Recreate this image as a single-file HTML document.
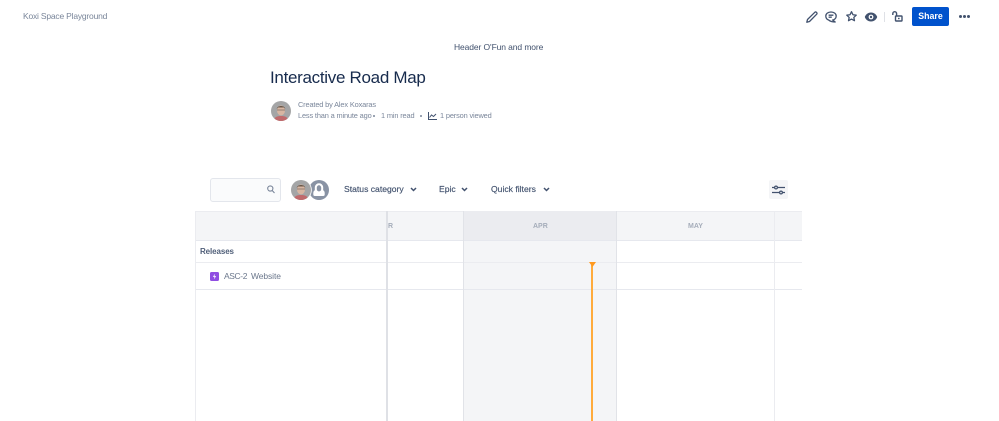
<!DOCTYPE html>
<html><head><meta charset="utf-8">
<style>
html,body{margin:0;padding:0;background:#fff}
body{width:999px;height:421px;overflow:hidden;position:relative;font-family:"Liberation Sans",sans-serif}
.a{position:absolute}
.t{position:absolute;white-space:nowrap;line-height:1;filter:blur(.25px)}
svg{position:absolute;overflow:visible}
.b{font-size:7.4px;letter-spacing:-.15px;color:#7a869a}
.f{font-size:8.6px;color:#42526e;font-weight:400;-webkit-text-stroke:.15px #42526e}
</style></head><body>
<div class="t" style="left:23px;top:12px;font-size:8.5px;letter-spacing:-.2px;color:#7a869a">Koxi Space Playground</div>

<!-- top icons -->
<svg style="left:805px;top:10px" width="14" height="14" viewBox="0 0 14 14" fill="none" stroke="#42526e" stroke-width="1.300" stroke-linejoin="round"><path d="M1.800 12.200l.7-2.700L9.800 2.300a1.100 1.100 0 0 1 1.600 0l.3.300a1.100 1.100 0 0 1 0 1.600L4.500 11.500z"/></svg>
<svg style="left:824px;top:10px" width="14" height="14" viewBox="0 0 14 14" fill="none" stroke="#42526e" stroke-width="1.300" stroke-linejoin="round"><path d="M7 2c3 0 5.200 1.700 5.200 4S10.400 9.800 8.600 10L11.200 12C8.600 12 6 11.200 4.600 10C2.800 9.400 1.800 7.800 1.800 6C1.800 3.700 4 2 7 2z"/><path d="M4.600 5.200h4.800M4.600 7.200h3.200"/></svg>
<svg style="left:845px;top:10px" width="13" height="13" viewBox="0 0 14 14" fill="none" stroke="#42526e" stroke-width="1.400" stroke-linejoin="round"><path d="M7 1.800l1.600 3.300 3.500.5-2.600 2.400.7 3.500L7 9.800l-3.200 1.700.7-3.500L1.900 5.600l3.500-.5z"/></svg>
<svg style="left:864px;top:11px" width="14" height="12" viewBox="0 0 14 12"><path d="M7 1.500C3.700 1.500 1.500 3.700.8 6c.7 2.300 2.900 4.500 6.200 4.500s5.500-2.200 6.200-4.500C12.500 3.700 10.300 1.500 7 1.500z" fill="#42526e"/><circle cx="7" cy="6" r="2.400" fill="#fff"/><circle cx="7" cy="6" r="1.200" fill="#42526e"/></svg>
<div class="a" style="left:884px;top:12px;width:1px;height:10px;background:#dfe1e6"></div>
<svg style="left:892px;top:11px" width="11" height="11" viewBox="0 0 11 11" fill="none" stroke="#42526e" stroke-width="1.400"><path d="M.8 4V2.600a1.900 1.900 0 0 1 3.800 0V5"/><rect x="3.500" y="5" width="6.500" height="5" rx=".6"/><rect x="6" y="6.800" width="1.600" height="1.400" fill="#42526e" stroke="none"/></svg>
<div class="a" style="left:912px;top:7px;width:37px;height:19px;background:#0052cc;border-radius:2px"></div>
<div class="t" style="left:912px;top:12px;width:37px;text-align:center;font-size:8.800px;font-weight:bold;color:#fff">Share</div>
<div class="a" style="left:959px;top:15px;width:3px;height:3px;border-radius:50%;background:#42526e"></div>
<div class="a" style="left:963px;top:15px;width:3px;height:3px;border-radius:50%;background:#42526e"></div>
<div class="a" style="left:967px;top:15px;width:3px;height:3px;border-radius:50%;background:#42526e"></div>

<div class="t" style="left:454px;top:43px;font-size:8.500px;letter-spacing:-.1px;color:#42526e">Header O'Fun and more</div>
<div class="t" style="left:270px;top:69px;font-size:17px;letter-spacing:-.3px;color:#172b4d">Interactive Road Map</div>

<!-- byline avatar -->
<svg style="left:271px;top:101px" width="20" height="20" viewBox="0 0 20 20"><defs><clipPath id="c1"><circle cx="10" cy="10" r="10"/></clipPath></defs><g clip-path="url(#c1)"><rect width="20" height="20" fill="#a4a5a6"/><ellipse cx="10" cy="9.500" rx="4" ry="5" fill="#d8b6a2"/><path d="M5.800 8C5.800 4 14.200 4 14.200 8L13 6.500H7z" fill="#6b5a4c"/><path d="M6 9h8" stroke="#7b6a60" stroke-width=".8"/><path d="M3 20c0-4 3-5 7-5s7 1 7 5z" fill="#c06a6c"/></g></svg>
<div class="t b" style="left:298px;top:100.500px">Created by Alex Koxaras</div>
<div class="t b" style="left:298px;top:111.500px">Less than a minute ago</div>
<div class="a" style="left:373px;top:115px;width:2px;height:2px;border-radius:50%;background:#7a869a"></div>
<div class="t b" style="left:381px;top:111.500px">1 min read</div>
<div class="a" style="left:420px;top:115px;width:2px;height:2px;border-radius:50%;background:#7a869a"></div>
<svg style="left:428px;top:112px" width="9" height="8" viewBox="0 0 9 8" fill="none" stroke="#42526e" stroke-width="1"><path d="M.5 0v7.500H9M1.500 5.500L3.500 3l2 1.500L8 2"/></svg>
<div class="t b" style="left:440px;top:111.500px">1 person viewed</div>

<!-- toolbar -->
<div class="a" style="left:210px;top:178px;width:69px;height:21.500px;border:1.500px solid #e3e6ec;border-radius:3px;background:#fafbfc"></div>
<svg style="left:267px;top:185px" width="8" height="9" viewBox="0 0 8 9" fill="none" stroke="#7a869a" stroke-width="1.100"><circle cx="3.300" cy="3.500" r="2.600"/><path d="M5.200 5.500L7.500 8"/></svg>
<svg style="left:309px;top:180px" width="20" height="20" viewBox="0 0 20 20"><circle cx="10" cy="10" r="10" fill="#8993a4"/><path d="M5.800 7.500a4.200 4.200 0 0 1 8.400 0v2.700c1 .6 1.500 1.600 1.500 2.800v1.500a1.500 1.500 0 0 1-1.500 1.500H5.800a1.500 1.500 0 0 1-1.500-1.500V13c0-1.200.5-2.200 1.500-2.800z" fill="#fff"/><path d="M7.800 7.500a2.200 2.200 0 0 1 4.400 0v1.700a2.200 2.200 0 0 1-4.400 0z" fill="#8993a4"/></svg>
<svg style="left:291px;top:180px" width="20" height="20" viewBox="0 0 20 20"><defs><clipPath id="c2"><circle cx="10" cy="10" r="10"/></clipPath></defs><circle cx="10" cy="10" r="10.800" fill="#fff"/><g clip-path="url(#c2)"><rect width="20" height="20" fill="#a4a5a6"/><ellipse cx="10" cy="9.500" rx="4" ry="5" fill="#d8b6a2"/><path d="M5.800 8C5.800 4 14.200 4 14.200 8L13 6.500H7z" fill="#6b5a4c"/><path d="M6 9h8" stroke="#7b6a60" stroke-width=".8"/><path d="M3 20c0-4 3-5 7-5s7 1 7 5z" fill="#c06a6c"/></g></svg>
<div class="t f" style="left:344px;top:185px">Status category</div>
<svg style="left:410px;top:187px" width="7" height="5" viewBox="0 0 7 5" fill="none" stroke="#42526e" stroke-width="1.500"><path d="M1 1l2.500 2.500L6 1"/></svg>
<div class="t f" style="left:439px;top:185px">Epic</div>
<svg style="left:461px;top:187px" width="7" height="5" viewBox="0 0 7 5" fill="none" stroke="#42526e" stroke-width="1.500"><path d="M1 1l2.500 2.500L6 1"/></svg>
<div class="t f" style="left:491px;top:185px">Quick filters</div>
<svg style="left:543px;top:187px" width="7" height="5" viewBox="0 0 7 5" fill="none" stroke="#42526e" stroke-width="1.500"><path d="M1 1l2.500 2.500L6 1"/></svg>
<div class="a" style="left:769px;top:180px;width:19px;height:19px;background:#f4f5f7;border-radius:2px"></div>
<svg style="left:772px;top:185px" width="13" height="10" viewBox="0 0 13 10" fill="none" stroke="#42526e" stroke-width="1.200"><path d="M0 2.500h2.500M5.500 2.500h7.500M0 7.500h7.500M10.500 7.500h2.500"/><circle cx="4" cy="2.500" r="1.400"/><circle cx="9" cy="7.500" r="1.400"/></svg>

<!-- roadmap -->
<div class="a" style="left:195px;top:211px;width:607px;height:29px;background:#f4f5f7"></div>
<div class="a" style="left:463px;top:211px;width:153px;height:29px;background:#ebecf0"></div>
<div class="a" style="left:463px;top:240px;width:153px;height:181px;background:#f4f5f7"></div>
<div class="a" style="left:195px;top:211px;width:607px;height:1px;background:#ebecf0"></div>
<div class="a" style="left:195px;top:240px;width:607px;height:1px;background:#e6e8ee"></div>
<div class="a" style="left:195px;top:262px;width:607px;height:1px;background:#ebecf0"></div>
<div class="a" style="left:195px;top:289px;width:607px;height:1px;background:#e6e8ee"></div>
<div class="a" style="left:195px;top:211px;width:1px;height:210px;background:#ebecf0"></div>
<div class="a" style="left:386px;top:211px;width:2px;height:210px;background:#dfe1e6"></div>
<div class="a" style="left:462.500px;top:211px;width:1.500px;height:210px;background:#e1e3e8"></div>
<div class="a" style="left:615.500px;top:211px;width:1.500px;height:210px;background:#e1e3e8"></div>
<div class="a" style="left:774px;top:211px;width:1px;height:210px;background:#ebecf0"></div>

<div class="t" style="left:388px;top:223px;font-size:7px;font-weight:bold;color:#a5adba">R</div>
<div class="t" style="left:533px;top:223px;font-size:7px;font-weight:bold;color:#a5adba">APR</div>
<div class="t" style="left:688px;top:223px;font-size:7px;font-weight:bold;color:#a5adba">MAY</div>
<div class="t" style="left:200px;top:248px;font-size:8px;letter-spacing:-.1px;font-weight:bold;color:#505f79">Releases</div>
<div class="a" style="left:209.500px;top:271.500px;width:9px;height:9px;background:#904ee2;border-radius:1.500px"></div>
<svg style="left:209.500px;top:271.500px" width="9" height="9" viewBox="0 0 8 8"><path d="M4.500 1.500L2.500 4.300H4L3.500 6.500L5.500 3.700H4z" fill="#fff"/></svg>
<div class="t" style="left:224px;top:272px;font-size:8.500px;letter-spacing:-.4px;color:#6b778c">ASC-2</div>
<div class="t" style="left:251px;top:272px;font-size:8.500px;letter-spacing:-.1px;color:#6b778c">Website</div>

<div class="a" style="left:591px;top:263px;width:2px;height:158px;background:#ffab3c"></div>
<svg style="left:588.500px;top:262px" width="7" height="5" viewBox="0 0 7 5"><path d="M0 0h7L3.500 5z" fill="#ff991f"/></svg>
</body></html>
